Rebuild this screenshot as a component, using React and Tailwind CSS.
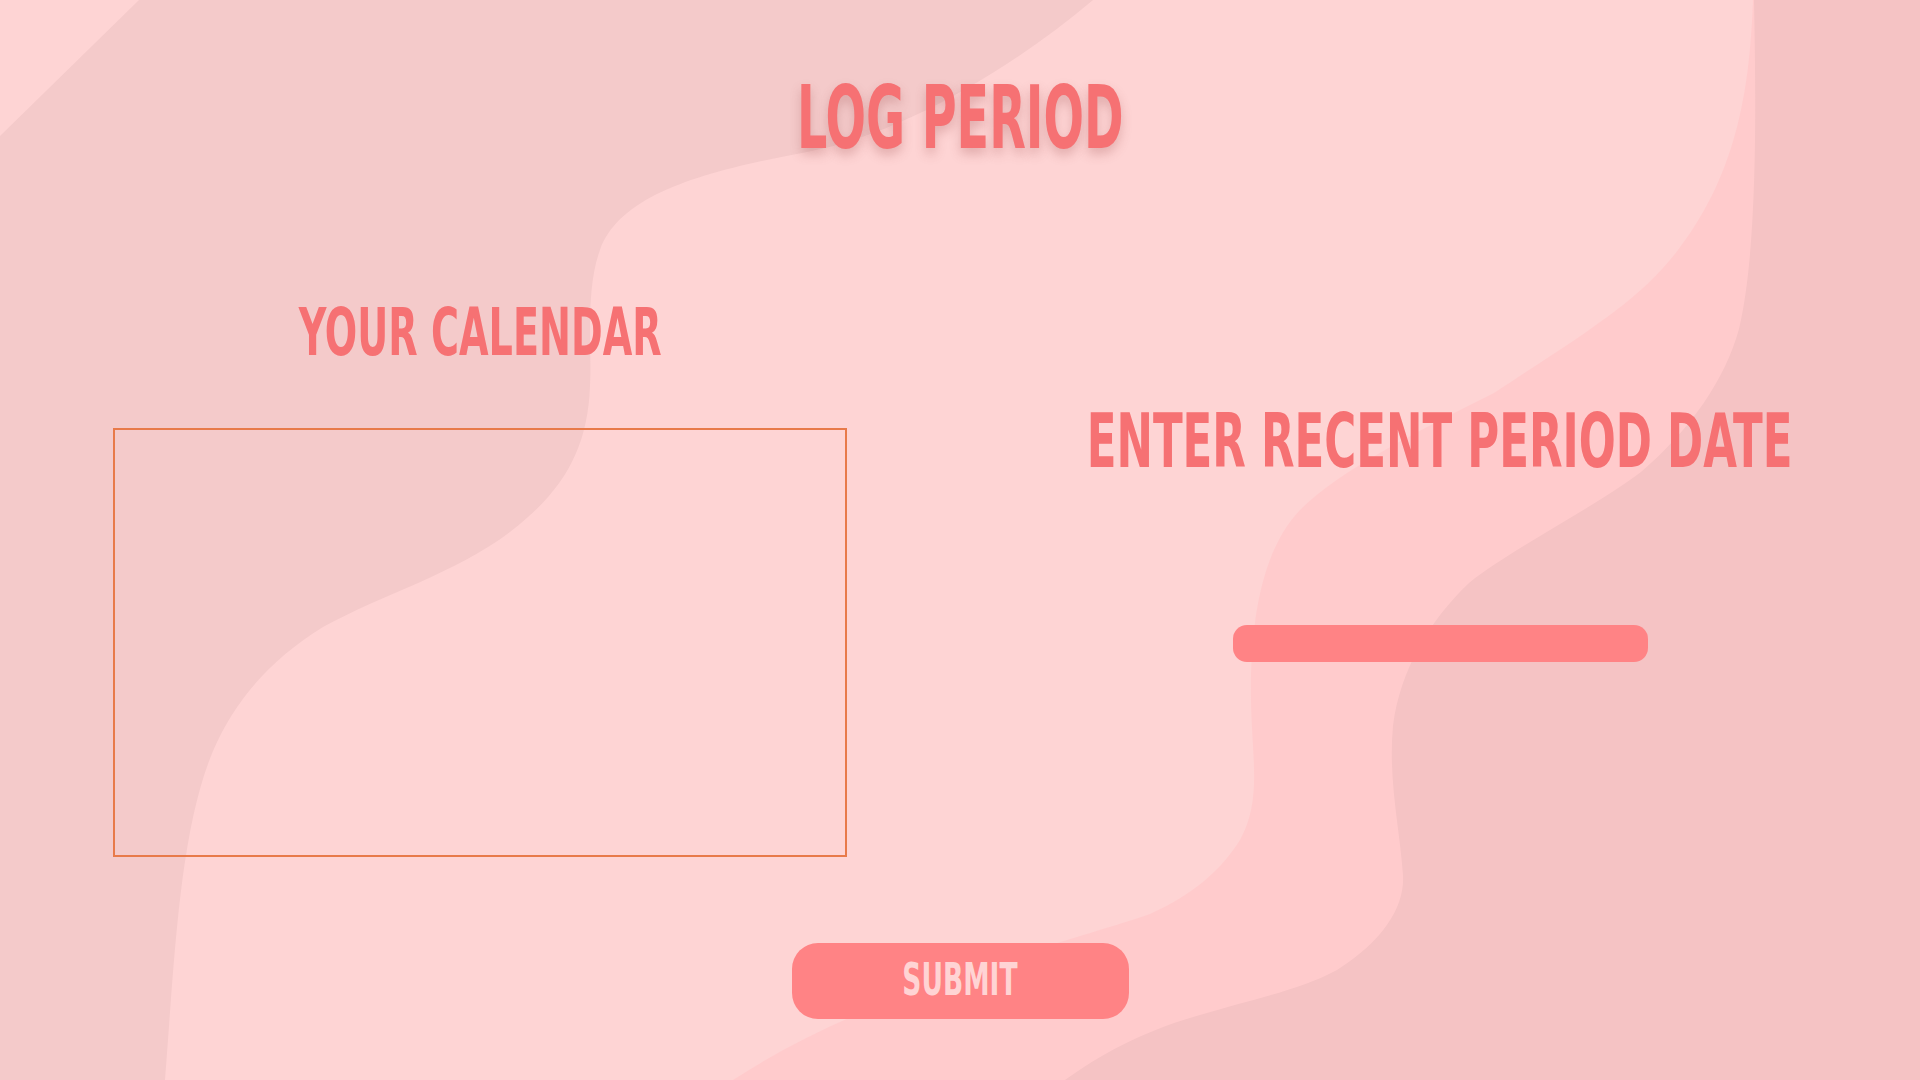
import React from "react";

const display = "font-['DejaVu_Sans_Condensed','DejaVu_Sans',sans-serif] font-bold uppercase leading-none whitespace-nowrap";

function Backdrop() {
  return (
    <svg
      className="absolute inset-0 h-full w-full"
      viewBox="0 0 1920 1080"
      preserveAspectRatio="none"
    >
      <rect width="1920" height="1080" fill="#fed4d4" />
      {/* left wave */}
      <path
        fill="#f4caca"
        d="M139 0 H1093 C1010 70 900 135 807 152 C700 172 620 195 600 250 C585 290 592 350 590 386 C588 440 570 480 528 517 C470 570 390 590 323 627 C270 660 235 700 213 751 C180 830 175 950 165 1080 H0 V136 Z"
      />
      {/* right waves */}
      <path
        fill="#ffcbcc"
        d="M1753 0 C1750 80 1740 170 1678 250 C1640 300 1590 330 1494 393 C1420 430 1340 470 1300 510 C1262 550 1250 620 1251 700 C1252 760 1262 800 1240 840 C1215 880 1180 900 1150 914 C1060 945 870 990 733 1080 H1920 V0 Z"
      />
      <path
        fill="#f5c3c4"
        d="M1754 0 C1756 100 1758 250 1739 329 C1725 380 1690 430 1641 472 C1590 510 1510 550 1469 583 C1430 620 1400 670 1393 726 C1388 780 1400 830 1403 875 C1405 905 1385 940 1337 970 C1300 990 1250 1000 1200 1015 C1140 1032 1100 1055 1065 1080 H1920 V0 Z"
      />
    </svg>
  );
}

export default function App() {
  return (
    <div className="relative h-[1080px] w-full overflow-hidden bg-[#fed4d4]">
      <Backdrop />

      <div className="relative flex flex-col items-center">
        <h1
          className={`${display} mt-[74px] h-[88px] text-[88px] text-[#f67173] [text-shadow:0_6px_14px_rgba(150,70,70,0.28)]`}
        >
          <span className="inline-block scale-x-[0.602]">Log Period</span>
        </h1>

        <div className="grid w-full grid-cols-2">
          {/* calendar side */}
          <div className="flex flex-col items-center">
            <h2 className={`${display} mt-[138px] h-[66px] text-[66px] text-[#f67173]`}>
              <span className="inline-block scale-x-[0.643]">Your Calendar</span>
            </h2>
            <div className="mt-[62px] h-[429px] w-[734px] border-2 border-[#e87a4a]" />
          </div>

          {/* date entry side */}
          <div className="flex flex-col items-center">
            <h2 className={`${display} mt-[242px] h-[74px] text-[74px] text-[#f67173]`}>
              <span className="inline-block scale-x-[0.654]">Enter Recent Period Date</span>
            </h2>
            <input
              type="text"
              aria-label="Recent period date"
              className="mt-[147px] h-[37px] w-[415px] rounded-[14px] bg-[#ff8385] px-3 text-[#ffd4d4] outline-none"
            />
          </div>
        </div>

        <button
          className={`${display} mt-[86px] flex h-[76px] w-[337px] items-center justify-center rounded-[26px] bg-[#ff8385] pb-[3px] text-[45px] text-[#ffd4d4]`}
        >
          <span className="inline-block scale-x-[0.655]">Submit</span>
        </button>
      </div>
    </div>
  );
}
